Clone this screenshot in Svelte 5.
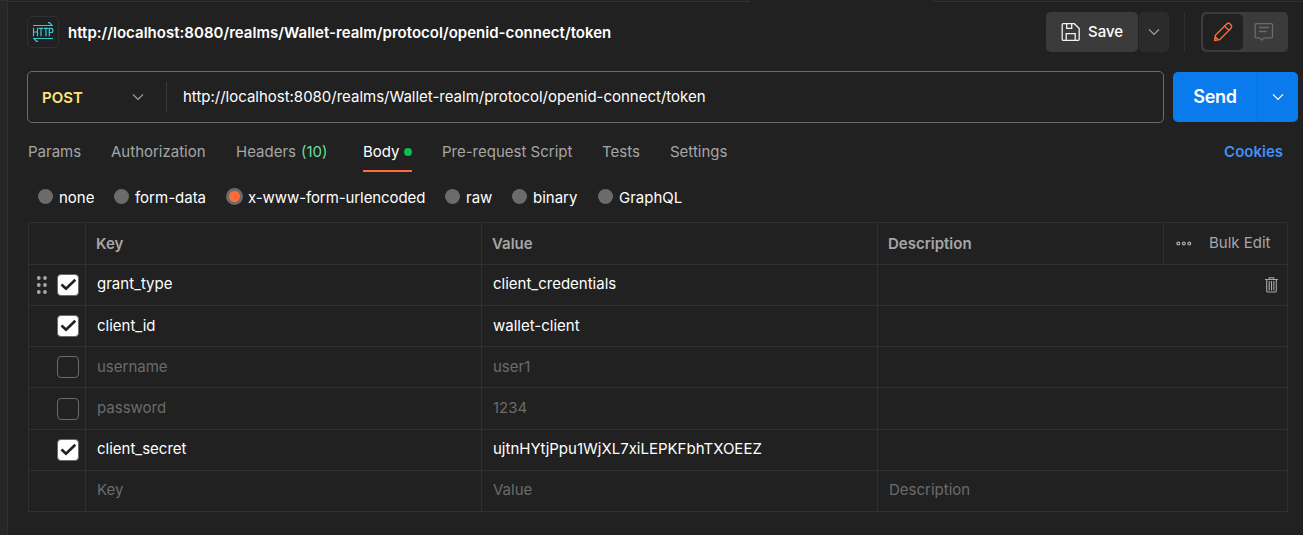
<script>
  const url = 'http://localhost:8080/realms/Wallet-realm/protocol/openid-connect/token';
  const tabs = [
    { label: 'Params', width: 83 },
    { label: 'Authorization', width: 125 },
    { label: 'Headers', count: '(10)', width: 127 },
    { label: 'Body', active: true, width: 79 },
    { label: 'Pre-request Script', width: 160 },
    { label: 'Tests', width: 68 },
    { label: 'Settings', width: 70 }
  ];
  const modes = [
    { label: 'none', width: 76 },
    { label: 'form-data', width: 113 },
    { label: 'x-www-form-urlencoded', width: 218, on: true },
    { label: 'raw', width: 67 },
    { label: 'binary', width: 86 },
    { label: 'GraphQL', width: 90 }
  ];
  const rows = [
    { key: 'grant_type', value: 'client_credentials', on: true, hover: true, h: 41 },
    { key: 'client_id', value: 'wallet-client', on: true, h: 41, low: true },
    { key: 'username', value: 'user1', h: 41, low: true },
    { key: 'password', value: '1234', h: 42, low: true },
    { key: 'client_secret', value: 'ujtnHYtjPpu1WjXL7xiLEPKFbhTXOEEZ', on: true, h: 41 },
    { key: 'Key', value: 'Value', desc: 'Description', empty: true, h: 41 }
  ];
</script>

{#snippet chevron()}
  <svg class="chev" width="12" height="8" viewBox="0 0 12 8"><path d="M1 1.3 6 6.3 11 1.3" fill="none" stroke="currentColor" stroke-width="1.2" /></svg>
{/snippet}

<div class="page">
  <aside></aside>
  <main>
    <div class="edge"><i></i><b></b></div>
    <header>
      <div class="http">
        <svg width="22" height="22" viewBox="0 0 22 22" fill="none" stroke="#35c8da" stroke-width="1.2">
          <path d="M1 4.5H21M16 1.7H17.5L19.9 4.5M21 17.5H1M6 20.3H4.5L2.1 17.5" />
          <path d="M1.5 6.8V15.2M5.5 6.8V15.2M1.5 11H5.5M6.7 7.3H11.2M9 7.3V15.2M11.8 7.3H16.3M14 7.3V15.2M17.3 15.2V7.3H19.2Q20.8 7.3 20.8 9.4T19.2 11.5H17.3" />
        </svg>
      </div>
      <h1>{url}</h1>
      <div class="save">
        <button class="main-save">
          <svg width="20" height="20" viewBox="0 0 20 20" fill="none" stroke="#f2f2f2" stroke-width="1.3">
            <path d="M2.2 1.7H13.3L18.2 6.6V17.3Q18.2 18.3 17.2 18.3H2.2Q1.2 18.3 1.2 17.3V2.7Q1.2 1.7 2.2 1.7ZM5.7 2V6.3H10.7V2M5.2 18V11.7H14.2V18" />
          </svg>
          <span>Save</span>
        </button>
        <button class="more-save">{@render chevron()}</button>
      </div>
      <div class="divider"></div>
      <div class="toggle">
        <div class="picked">
          <svg width="20" height="20" viewBox="0 0 20 20" fill="none" stroke="#ff6c37" stroke-width="1.35" stroke-linejoin="round">
            <path d="M1.5 18.5 2.4 13.2 13.2 2.4Q15.4.2 17.6 2.4T17.6 6.8L6.8 17.6ZM11.6 4 16 8.4M2.2 14.8 5.2 17.8" />
          </svg>
        </div>
        <svg class="comment" width="20" height="20" viewBox="0 0 20 20" fill="none" stroke="#6b6b6b" stroke-width="1.3">
          <path d="M2.2 1.6H17.5Q18.5 1.6 18.5 2.6V14.9Q18.5 15.9 17.5 15.9H10L7.7 18.2 5.4 15.9H2.2Q1.2 15.9 1.2 14.9V2.6Q1.2 1.6 2.2 1.6ZM5 5.5H15M5 9.5H12.5" />
        </svg>
      </div>
    </header>

    <section class="request">
      <div class="urlbar">
        <div class="method"><span>POST</span>{@render chevron()}</div>
        <div class="url">{url}</div>
      </div>
      <div class="send">
        <button class="go">Send</button>
        <button class="drop">{@render chevron()}</button>
      </div>
    </section>

    <nav>
      {#each tabs as t}
        <div class="tab" style:width="{t.width}px">
          <span class="label" class:active={t.active}>{t.label}{#if t.count}<em>{t.count}</em>{/if}{#if t.active}<i></i>{/if}</span>
        </div>
      {/each}
      <a class="cookies">Cookies</a>
    </nav>

    <div class="modes">
      {#each modes as m}
        <div class="mode" class:on={m.on} style:width="{m.width}px"><i></i><span>{m.label}</span></div>
      {/each}
    </div>

    <div class="table">
      <div class="row head">
        <div></div>
        <div class="cell">Key</div>
        <div class="cell">Value</div>
        <div class="cell">Description</div>
        <div class="tools">
          <svg width="16" height="6" viewBox="0 0 16 6" fill="none" stroke="#a6a6a6" stroke-width="1.3"><circle cx="2.3" cy="2.5" r="1.4" /><circle cx="7.8" cy="2.5" r="1.4" /><circle cx="13.3" cy="2.5" r="1.4" /></svg>
          <span>Bulk Edit</span>
        </div>
      </div>
      {#each rows as r}
        <div class="row" class:dim={!r.on} class:low={r.low} style:height="{r.h}px">
          <div class="check">
            {#if r.hover}
              <svg class="grip" width="12" height="18" viewBox="0 0 12 18" fill="#a6a6a6">
                {#each [2, 9, 16] as y}<circle cx="2.8" cy={y} r="1.9" /><circle cx="9" cy={y} r="1.9" />{/each}
              </svg>
            {/if}
            {#if !r.empty}
              <span class="box" class:on={r.on}>
                {#if r.on}<svg width="20" height="20" viewBox="0 0 20 20"><path d="M3.5 9.5 8 13.7 17.3 4.8" fill="none" stroke="#212121" stroke-width="2.7" /></svg>{/if}
              </span>
            {/if}
          </div>
          <div class="cell">{r.key}</div>
          <div class="cell">{r.value}</div>
          <div class="cell last">
            <span>{r.desc ?? ''}</span>
            {#if r.hover}
              <svg class="trash" width="13" height="16" viewBox="0 0 13 16" fill="none" stroke="#a6a6a6" stroke-width="1.1">
                <path d="M0 2.5H13M4.3 2.2V.8H8.7V2.2M1.7 3V14Q1.7 15 2.7 15H10.3Q11.3 15 11.3 14V3M4.2 4V13.5M6.5 4V13.5M8.8 4V13.5" />
              </svg>
            {/if}
          </div>
        </div>
      {/each}
    </div>
  </main>
</div>

<style>
  :global(body) { margin: 0; background: #212121; }
  .page, .page * { box-sizing: border-box; }
  .page {
    display: flex; width: 1303px; height: 535px; overflow: hidden;
    background: #212121; color: #fff;
    font: 15px/20px Inter, sans-serif;
    white-space: nowrap;
  }
  aside { width: 8px; flex: none; background: #262626; border-right: 1px solid #303030; border-top: 1px solid #303030; }
  main { width: 1295px; }
  svg { display: block; flex: none; }
  button { font: inherit; color: inherit; border: 0; padding: 0; display: flex; align-items: center; }
  .edge { height: 2px; display: flex; justify-content: space-between; }
  .edge i { width: 741px; border: solid #303030; border-width: 0 1px 1px 0; }
  .edge b { width: 370px; border: solid #303030; border-width: 0 0 1px 1px; }

  header { height: 60px; padding: 10px 15px 0 19px; display: flex; }
  .http { width: 32px; height: 32px; margin-top: 4px; border: 1px solid #303030; border-radius: 5px; display: grid; place-items: center; }
  h1 { margin: 11px 0 0 9px; font-size: 15px; line-height: 20px; font-weight: 600; letter-spacing: .025px; flex: 1; }
  .save { display: flex; gap: 1px; height: 40px; }
  .main-save { width: 92px; background: #3b3b3b; border-radius: 5px; padding-left: 15px; gap: 7px; font-weight: 500; }
  .more-save { width: 30px; background: #2b2b2b; border-radius: 5px; justify-content: center; color: #a6a6a6; }
  .divider { width: 1px; height: 40px; margin: 0 16px 0 15px; background: #303030; }
  .toggle { width: 87px; height: 40px; background: #3b3b3b; border-radius: 5px; padding: 2px; display: flex; align-items: center; }
  .picked { width: 40px; height: 36px; background: #212121; border-radius: 5px; display: grid; place-items: center; }
  .comment { margin-left: 11px; }

  .request { display: flex; height: 61px; padding: 9px 0 0 19px; gap: 9px; }
  .urlbar { width: 1137px; height: 52px; border: 1px solid #6b6b6b; border-radius: 5px; display: flex; align-items: center; }
  .method { width: 139px; height: 30px; border-right: 1px solid #3b3b3b; display: flex; align-items: center; padding: 0 22px 0 14px; justify-content: space-between; color: #ffe47e; font-weight: 600; }
  .method span { padding-top: 2px; }
  .method .chev { color: #a6a6a6; }
  .url { padding-left: 16px; letter-spacing: -.01px; }
  .send { display: flex; width: 125px; height: 50px; margin-top: 1px; border-radius: 5px; overflow: hidden; background: #097bed; }
  .go { width: 84px; background: none; justify-content: center; font-size: 18px; font-weight: 600; letter-spacing: -.3px; }
  .drop { flex: 1; background: none; border-left: 1px solid #0a6fd6; justify-content: center; }

  nav { display: flex; height: 49px; padding: 19px 20px 0 20px; color: #a6a6a6; }
  .label { display: inline-flex; align-items: center; height: 29px; padding-bottom: 9px; }
  .label em { font-style: normal; color: #6bdd9a; margin-left: 5px; }
  .label.active { color: #fff; height: 30px; padding-bottom: 8px; border-bottom: 2px solid #ff6c37; margin-top: -1px; padding-top: 1px; }
  .label i { width: 8px; height: 8px; border-radius: 50%; background: #0cbb52; margin-left: 4px; }
  .cookies { margin-left: auto; color: #4290f5; font-weight: 600; }

  .modes { display: flex; height: 50px; padding: 16px 0 0 30px; }
  .mode { display: flex; height: 20px; }
  .mode i { width: 15px; height: 15px; margin: 1px 6px 0 0; border-radius: 50%; background: #6b6b6b; }
  .mode.on i { width: 17px; height: 17px; margin: 0 5px 0 -1px; border: 3px solid #6b6b6b; background: #ff6c37; }
  .mode.on span { letter-spacing: -.09px; }

  .table { width: 1260px; margin-left: 20px; border: solid #303030; border-width: 0 1px 1px; }
  .row { display: grid; grid-template-columns: 56px 396px 396px 1fr; border-top: 1px solid #303030; }
  .head { height: 42px; grid-template-columns: 56px 396px 396px 286px 1fr; color: #a6a6a6; }
  .cell { border-left: 1px solid #303030; padding: 9px 0 0 11px; }
  .low .cell { padding-top: 10px; }
  .head .cell { padding: 11px 0 0 10px; font-weight: 600; }
  .tools { display: flex; align-items: center; border-left: 1px solid #303030; padding-left: 12px; gap: 17px; }
  .tools span { padding-bottom: 2px; }
  .dim { color: #6b6b6b; }
  .check { display: flex; align-items: center; justify-content: flex-end; padding-right: 6px; }
  .grip { margin-right: 9px; }
  .box { width: 22px; height: 22px; border: 1px solid #6b6b6b; border-radius: 4px; }
  .box.on { background: #fff; }
  .cell.last { display: flex; justify-content: space-between; padding-right: 9px; }
  .trash { margin-top: 3px; }
</style>
